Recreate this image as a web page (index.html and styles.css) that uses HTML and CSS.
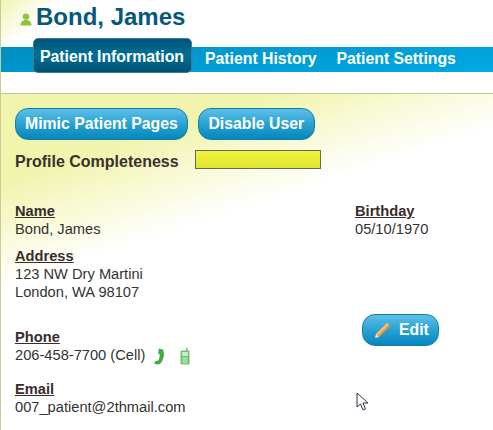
FILE: index.html
```html
<!DOCTYPE html>
<html lang="en">
<head>
    <meta charset="UTF-8">
    <title>Bond, James</title>
    <link rel="stylesheet" href="styles.css">
</head>
<body>
    <div class="page">
        <header class="header">
            <svg class="user-icon" width="12" height="13" viewBox="0 0 12 13">
                <circle cx="6" cy="3.600" r="3.200" fill="#8cc63f"/>
                <path d="M0.500 12.500 C0.500 8.500 3 7.500 4.500 7 L7.500 7 C9 7.500 11.500 8.500 11.500 12.500 Z" fill="#8cc63f"/>
            </svg>
            <h1>Bond, James</h1>
        </header>
        <nav class="nav">
            <a class="tab active">Patient Information</a>
            <a class="tab">Patient History</a>
            <a class="tab">Patient Settings</a>
        </nav>
        <main class="content">
            <div class="actions">
                <button class="btn">Mimic Patient Pages</button>
                <button class="btn btn-disable">Disable User</button>
            </div>
            <div class="completeness">
                <span class="completeness-label">Profile Completeness</span>
                <div class="completeness-bar"></div>
            </div>
            <div class="details">
                <div class="details-left">
                    <div class="field">
                        <div class="field-label">Name</div>
                        <div>Bond, James</div>
                    </div>
                    <div class="field field-address">
                        <div class="field-label">Address</div>
                        <div>123 NW Dry Martini</div>
                        <div>London, WA 98107</div>
                    </div>
                    <div class="field field-phone">
                        <div class="field-label">Phone</div>
                        <div class="phone-row">
                            206-458-7700 (Cell)
                            <svg class="phone-icon" width="11" height="17" viewBox="0 0 11 17">
                                <path d="M5 0.500 L9 1.500 C10.500 5 10.500 11 6.500 15.500 C5 16.800 2.500 16.800 0.500 15.800 L1 13 L4 12.800 C5.500 10.500 6 8 5.500 6 L4 5.500 Z" fill="#3fae49"/>
                            </svg>
                            <svg class="cell-icon" width="10" height="17" viewBox="0 0 10 17">
                                <rect x="6" y="0" width="1.500" height="3" fill="#6cc070"/>
                                <rect x="0.500" y="2.500" width="9" height="14" rx="1" fill="#6cc070"/>
                                <rect x="2" y="4" width="6" height="4" fill="#c8ecc8"/>
                                <path d="M2 10h6M2 12h6M2 14h6M4 9v7M6 9v7" stroke="#c8ecc8" stroke-width="0.700"/>
                            </svg>
                        </div>
                    </div>
                    <div class="field field-email">
                        <div class="field-label">Email</div>
                        <div>007_patient@2thmail.com</div>
                    </div>
                </div>
                <div class="details-right">
                    <div class="field">
                        <div class="field-label">Birthday</div>
                        <div>05/10/1970</div>
                    </div>
                    <button class="btn btn-edit">
                        <svg width="17" height="17" viewBox="0 0 17 17">
                            <path d="M13 1 L16 4 L5 15 L2 12 Z" fill="#ee9a3a"/>
                            <path d="M13 1 L14.500 2.500 L3.500 13.500 L2 12 Z" fill="#f7bd78"/>
                            <path d="M2 12 L5 15 L1 16 Z" fill="#fbe6cc"/>
                        </svg>
                        Edit
                    </button>
                    <svg class="cursor" width="14" height="20" viewBox="0 0 14 20">
                        <path d="M1 1 L1 15 L4.500 12 L7 18 L9.500 17 L7 11 L12 11 Z" fill="#fff" stroke="#333346" stroke-width="1"/>
                    </svg>
                </div>
            </div>
        </main>
    </div>
</body>
</html>
```

FILE: styles.css
```css
html, body {
    margin: 0;
    padding: 0;
    height: 100%;
    background-color: #fff;
}

body {
    font-family: "Liberation Sans", Arial, sans-serif;
    font-size: 14.67px;
    color: #333;
    overflow: hidden;
}

.page {
    height: 430px;
    border-left: 1px solid #c9cc94;
    box-sizing: border-box;
}

.header {
    height: 39px;
    display: flex;
    align-items: center;
    padding: 0 0 6px 19px;
    box-sizing: border-box;
    background: linear-gradient(135deg, #f1f4b4 0%, #fff 42px);
}

.user-icon {
    margin-top: 6px;
}

h1 {
    margin: 0 0 0 4px;
    font-size: 24px;
    line-height: 34px;
    font-weight: bold;
    color: #05587a;
}

.nav {
    height: 25px;
    margin: 8px 0 21px;
    padding-left: 32px;
    display: flex;
    align-items: center;
    background: linear-gradient(172deg, #008fc2, #00a9e4);
}

.tab {
    font-size: 15.8px;
    line-height: 23px;
    font-weight: bold;
    white-space: nowrap;
    color: #fff;
    padding: 0 10px;
    margin: -2px 0 0 0;
}

.tab.active {
    height: 35px;
    line-height: 36px;
    margin: -8px 3px 0 0;
    padding: 0 6px;
    box-sizing: border-box;
    width: 159px;
    border: 1px solid #3c7d92;
    border-radius: 5px;
    background: linear-gradient(#00557a, #006f96 50%, #004f72);
}

.content {
    height: 337px;
    box-sizing: border-box;
    padding: 14px 14px 0;
    border-top: 1px solid #c6c69a;
    background: linear-gradient(162deg, #f1f4ac 85px, #f7f9cf 125px, #fff 185px);
}

.actions {
    display: flex;
    gap: 10px;
}

.btn {
    height: 32px;
    padding: 0 9px;
    font-family: inherit;
    font-size: 15.8px;
    font-weight: bold;
    color: #fff;
    border: 1px solid #0f7ea8;
    border-radius: 13px;
    background: linear-gradient(#5cc0e8, #2aa2d2 50%, #0587bd);
}

.btn-disable {
    width: 117px;
}

.completeness {
    display: flex;
    align-items: flex-start;
    margin-top: 10px;
}

.completeness-label {
    width: 180px;
    font-size: 16px;
    line-height: 20px;
    padding-top: 2px;
    font-weight: bold;
    color: #3a3030;
}

.completeness-bar {
    width: 124px;
    height: 17px;
    border: 1px solid #666;
    background: linear-gradient(#eef53a, #dfe430);
}

.details {
    display: flex;
    margin-top: 30px;
}

.details-left {
    width: 340px;
}

.field {
    line-height: 18px;
}

.field-label {
    font-weight: bold;
    text-decoration: underline;
    color: #3a2c2c;
}

.field-address {
    margin-top: 9px;
}

.field-phone {
    margin-top: 27px;
}

.field-email {
    margin-top: 16px;
}

.phone-row {
    display: flex;
    align-items: center;
    height: 18px;
}

.phone-icon {
    margin-left: 9px;
    margin-top: 3px;
}

.cell-icon {
    margin-left: 15px;
    margin-top: 3px;
}

.details-right {
    position: relative;
}

.btn-edit {
    display: flex;
    align-items: center;
    gap: 8px;
    margin: 76px 0 0 7px;
    padding: 0 9px 0 11px;
}

.cursor {
    position: absolute;
    left: 1px;
    top: 190px;
}
```
